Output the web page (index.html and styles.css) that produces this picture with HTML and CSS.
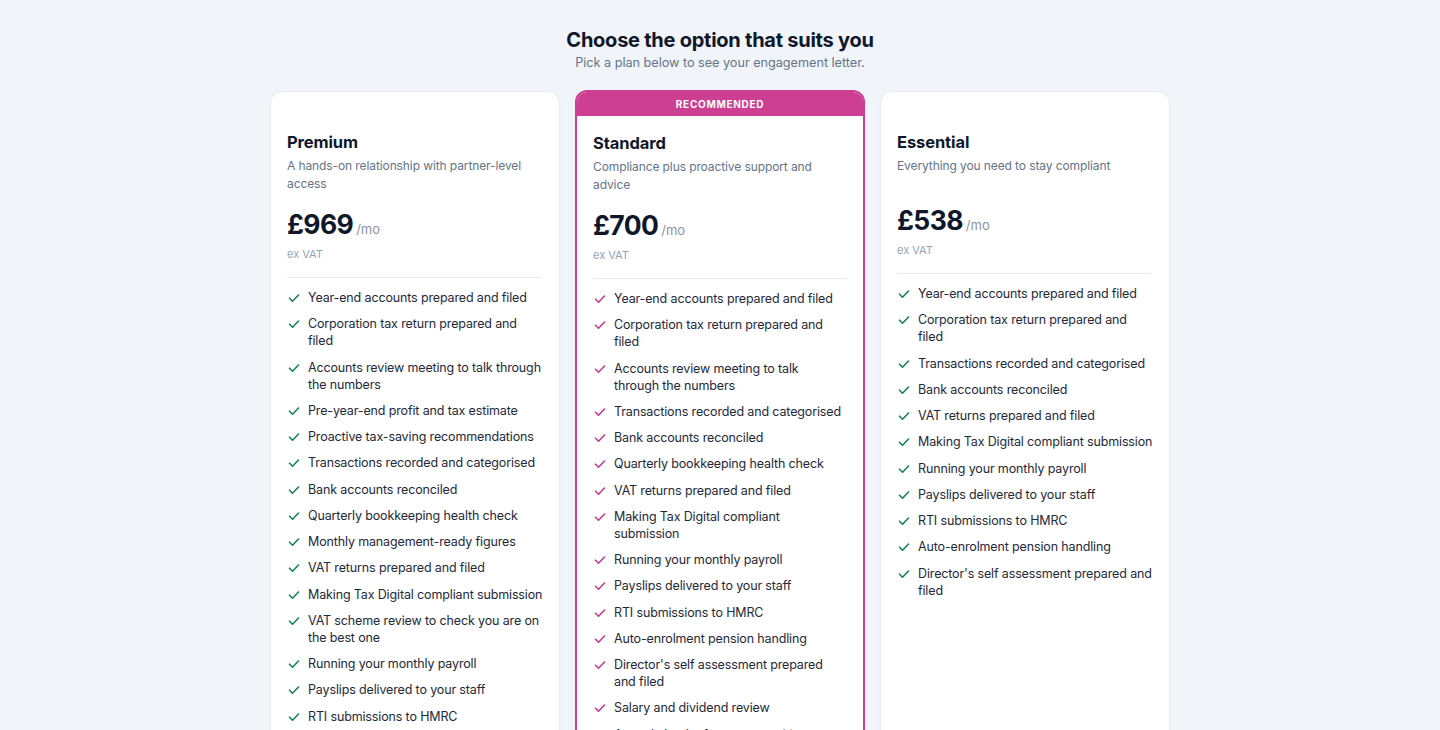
FILE: index.html
```html
<!DOCTYPE html>
<html lang="en">
<head>
<meta charset="utf-8">
<title>Choose the option that suits you</title>
<link rel="stylesheet" href="styles.css">
</head>
<body>
<main class="page">
  <header class="intro">
    <h1>Choose the option that suits you</h1>
    <p>Pick a plan below to see your engagement letter.</p>
  </header>
  <section class="plans">
    <article class="card">
      <div class="card-body">
        <h2>Premium</h2>
        <p class="desc">A hands-on relationship with partner-level access</p>
        <div class="price"><span class="amount">£969</span><span class="per">/mo</span></div>
        <div class="vat">ex VAT</div>
        <ul class="features green">
          <li><svg viewBox="0 0 14 14"><path d="M2.5 7.2l3 3 6-6.2"/></svg><span>Year-end accounts prepared and filed</span></li>
          <li><svg viewBox="0 0 14 14"><path d="M2.5 7.2l3 3 6-6.2"/></svg><span>Corporation tax return prepared and filed</span></li>
          <li><svg viewBox="0 0 14 14"><path d="M2.5 7.2l3 3 6-6.2"/></svg><span>Accounts review meeting to talk through the numbers</span></li>
          <li><svg viewBox="0 0 14 14"><path d="M2.5 7.2l3 3 6-6.2"/></svg><span>Pre-year-end profit and tax estimate</span></li>
          <li><svg viewBox="0 0 14 14"><path d="M2.5 7.2l3 3 6-6.2"/></svg><span>Proactive tax-saving recommendations</span></li>
          <li><svg viewBox="0 0 14 14"><path d="M2.5 7.2l3 3 6-6.2"/></svg><span>Transactions recorded and categorised</span></li>
          <li><svg viewBox="0 0 14 14"><path d="M2.5 7.2l3 3 6-6.2"/></svg><span>Bank accounts reconciled</span></li>
          <li><svg viewBox="0 0 14 14"><path d="M2.5 7.2l3 3 6-6.2"/></svg><span>Quarterly bookkeeping health check</span></li>
          <li><svg viewBox="0 0 14 14"><path d="M2.5 7.2l3 3 6-6.2"/></svg><span>Monthly management-ready figures</span></li>
          <li><svg viewBox="0 0 14 14"><path d="M2.5 7.2l3 3 6-6.2"/></svg><span>VAT returns prepared and filed</span></li>
          <li><svg viewBox="0 0 14 14"><path d="M2.5 7.2l3 3 6-6.2"/></svg><span>Making Tax Digital compliant submission</span></li>
          <li><svg viewBox="0 0 14 14"><path d="M2.5 7.2l3 3 6-6.2"/></svg><span>VAT scheme review to check you are on the best one</span></li>
          <li><svg viewBox="0 0 14 14"><path d="M2.5 7.2l3 3 6-6.2"/></svg><span>Running your monthly payroll</span></li>
          <li><svg viewBox="0 0 14 14"><path d="M2.5 7.2l3 3 6-6.2"/></svg><span>Payslips delivered to your staff</span></li>
          <li><svg viewBox="0 0 14 14"><path d="M2.5 7.2l3 3 6-6.2"/></svg><span>RTI submissions to HMRC</span></li>
          <li><svg viewBox="0 0 14 14"><path d="M2.5 7.2l3 3 6-6.2"/></svg><span>Auto-enrolment pension handling</span></li>
          <li><svg viewBox="0 0 14 14"><path d="M2.5 7.2l3 3 6-6.2"/></svg><span>Director's self assessment prepared and filed</span></li>
        </ul>
      </div>
    </article>

    <article class="card featured">
      <div class="badge">RECOMMENDED</div>
      <div class="card-body">
        <h2>Standard</h2>
        <p class="desc">Compliance plus proactive support and advice</p>
        <div class="price"><span class="amount">£700</span><span class="per">/mo</span></div>
        <div class="vat">ex VAT</div>
        <ul class="features pink">
          <li><svg viewBox="0 0 14 14"><path d="M2.5 7.2l3 3 6-6.2"/></svg><span>Year-end accounts prepared and filed</span></li>
          <li><svg viewBox="0 0 14 14"><path d="M2.5 7.2l3 3 6-6.2"/></svg><span>Corporation tax return prepared and filed</span></li>
          <li><svg viewBox="0 0 14 14"><path d="M2.5 7.2l3 3 6-6.2"/></svg><span>Accounts review meeting to talk through the numbers</span></li>
          <li><svg viewBox="0 0 14 14"><path d="M2.5 7.2l3 3 6-6.2"/></svg><span>Transactions recorded and categorised</span></li>
          <li><svg viewBox="0 0 14 14"><path d="M2.5 7.2l3 3 6-6.2"/></svg><span>Bank accounts reconciled</span></li>
          <li><svg viewBox="0 0 14 14"><path d="M2.5 7.2l3 3 6-6.2"/></svg><span>Quarterly bookkeeping health check</span></li>
          <li><svg viewBox="0 0 14 14"><path d="M2.5 7.2l3 3 6-6.2"/></svg><span>VAT returns prepared and filed</span></li>
          <li><svg viewBox="0 0 14 14"><path d="M2.5 7.2l3 3 6-6.2"/></svg><span>Making Tax Digital compliant submission</span></li>
          <li><svg viewBox="0 0 14 14"><path d="M2.5 7.2l3 3 6-6.2"/></svg><span>Running your monthly payroll</span></li>
          <li><svg viewBox="0 0 14 14"><path d="M2.5 7.2l3 3 6-6.2"/></svg><span>Payslips delivered to your staff</span></li>
          <li><svg viewBox="0 0 14 14"><path d="M2.5 7.2l3 3 6-6.2"/></svg><span>RTI submissions to HMRC</span></li>
          <li><svg viewBox="0 0 14 14"><path d="M2.5 7.2l3 3 6-6.2"/></svg><span>Auto-enrolment pension handling</span></li>
          <li><svg viewBox="0 0 14 14"><path d="M2.5 7.2l3 3 6-6.2"/></svg><span>Director's self assessment prepared and filed</span></li>
          <li><svg viewBox="0 0 14 14"><path d="M2.5 7.2l3 3 6-6.2"/></svg><span>Salary and dividend review</span></li>
          <li><svg viewBox="0 0 14 14"><path d="M2.5 7.2l3 3 6-6.2"/></svg><span>Annual check of your tax position</span></li>
        </ul>
      </div>
    </article>

    <article class="card">
      <div class="card-body">
        <h2>Essential</h2>
        <p class="desc">Everything you need to stay compliant</p>
        <div class="price"><span class="amount">£538</span><span class="per">/mo</span></div>
        <div class="vat">ex VAT</div>
        <ul class="features green">
          <li><svg viewBox="0 0 14 14"><path d="M2.5 7.2l3 3 6-6.2"/></svg><span>Year-end accounts prepared and filed</span></li>
          <li><svg viewBox="0 0 14 14"><path d="M2.5 7.2l3 3 6-6.2"/></svg><span>Corporation tax return prepared and filed</span></li>
          <li><svg viewBox="0 0 14 14"><path d="M2.5 7.2l3 3 6-6.2"/></svg><span>Transactions recorded and categorised</span></li>
          <li><svg viewBox="0 0 14 14"><path d="M2.5 7.2l3 3 6-6.2"/></svg><span>Bank accounts reconciled</span></li>
          <li><svg viewBox="0 0 14 14"><path d="M2.5 7.2l3 3 6-6.2"/></svg><span>VAT returns prepared and filed</span></li>
          <li><svg viewBox="0 0 14 14"><path d="M2.5 7.2l3 3 6-6.2"/></svg><span>Making Tax Digital compliant submission</span></li>
          <li><svg viewBox="0 0 14 14"><path d="M2.5 7.2l3 3 6-6.2"/></svg><span>Running your monthly payroll</span></li>
          <li><svg viewBox="0 0 14 14"><path d="M2.5 7.2l3 3 6-6.2"/></svg><span>Payslips delivered to your staff</span></li>
          <li><svg viewBox="0 0 14 14"><path d="M2.5 7.2l3 3 6-6.2"/></svg><span>RTI submissions to HMRC</span></li>
          <li><svg viewBox="0 0 14 14"><path d="M2.5 7.2l3 3 6-6.2"/></svg><span>Auto-enrolment pension handling</span></li>
          <li><svg viewBox="0 0 14 14"><path d="M2.5 7.2l3 3 6-6.2"/></svg><span>Director's self assessment prepared and filed</span></li>
        </ul>
      </div>
    </article>
  </section>
</main>
</body>
</html>
```

FILE: styles.css
```css
* { box-sizing: border-box; }

html, body {
  margin: 0;
  padding: 0;
  background: #f1f4f8;
}

body {
  font-family: Inter, "Noto Sans", "Liberation Sans", sans-serif;
  color: #0f172a;
  -webkit-font-smoothing: antialiased;
}

.page {
  padding-top: 28px;
  padding-bottom: 40px;
}

.intro {
  text-align: center;
}

.intro h1 {
  margin: 0;
  font-size: 20px;
  line-height: 24px;
  font-weight: 700;
  letter-spacing: -0.25px;
  color: #0f172a;
}

.intro p {
  margin: 2px 0 0;
  font-size: 12.7px;
  line-height: 18px;
  letter-spacing: -0.03px;
  color: #64748b;
}

.plans {
  width: 900px;
  margin: 19px auto 0;
  display: grid;
  grid-template-columns: repeat(3, 1fr);
  gap: 15px;
  align-items: start;
}

.card {
  background: #ffffff;
  border: 1px solid #e8ebf0;
  border-radius: 12px;
  box-shadow: 0 1px 2px rgba(15, 23, 42, 0.04);
  min-height: 700px;
}

.card-body {
  padding: 38px 18px 24px 16px;
}

.card.featured {
  border: 2px solid #cc3f92;
  margin-top: -1px;
  overflow: hidden;
}

.featured .badge {
  background: #cc3f92;
  color: #ffffff;
  height: 24px;
  line-height: 24px;
  text-align: center;
  font-size: 10px;
  font-weight: 700;
  letter-spacing: 0.7px;
}

.featured .card-body {
  padding: 15px 16px 24px;
}

.card h2 {
  margin: 0;
  font-size: 16.5px;
  line-height: 24px;
  font-weight: 700;
  letter-spacing: -0.1px;
  color: #0f172a;
}

.desc {
  margin: 3px 0 14px;
  min-height: 32px;
  font-size: 12px;
  line-height: 18px;
  letter-spacing: -0.1px;
  color: #64748b;
}

.price {
  display: flex;
  align-items: baseline;
  gap: 3px;
  height: 34px;
}

.amount {
  font-size: 26.5px;
  line-height: 34px;
  font-weight: 700;
  letter-spacing: -0.6px;
  color: #0f172a;
}

.per {
  font-size: 13px;
  color: #8a94a6;
}

.vat {
  margin-top: 6px;
  font-size: 11px;
  line-height: 14px;
  color: #94a3b8;
  padding-bottom: 16px;
  border-bottom: 1px solid #e7eaef;
}

.features {
  list-style: none;
  margin: 0 -3px 0 0;
  padding: 11px 0 0;
  display: flex;
  flex-direction: column;
  gap: 9.25px;
}

.featured .features {
  margin-right: 3px;
}

.features li {
  display: flex;
  align-items: flex-start;
  gap: 7px;
  font-size: 12.5px;
  line-height: 17px;
  letter-spacing: -0.14px;
  color: #1e293b;
}

.features svg {
  flex: none;
  width: 14px;
  height: 14px;
  margin-top: 2px;
  fill: none;
  stroke-width: 1.6;
  stroke-linecap: round;
  stroke-linejoin: round;
}

.features.green svg { stroke: #17825a; }
.features.pink svg { stroke: #c93a8d; }
```
